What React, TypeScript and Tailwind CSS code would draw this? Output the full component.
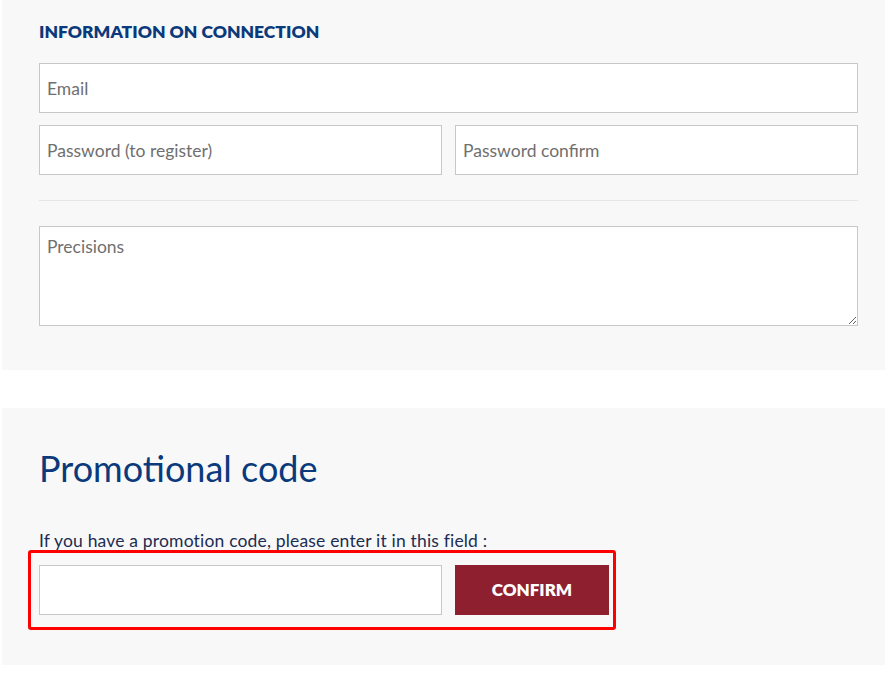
import React from 'react';

const font = { fontFamily: 'Lato, "Open Sans", sans-serif' };

export default function App() {
  const field =
    'h-[50px] w-full border border-[#c8c8c8] bg-white px-[7px] text-[17.5px] text-[#333] placeholder:text-[#6f6f6f] outline-none';

  return (
    <div className="min-h-[673px] w-[885px] bg-white" style={font}>
      {/* Connection info */}
      <section className="ml-[2px] h-[370px] bg-[#f8f8f8] pl-[37px] pt-[20px]">
        <div className="w-[819px]">
          <h3 className="text-[17.5px] font-extrabold uppercase leading-[24px] text-[#0b3a7c]">
            Information on connection
          </h3>
          <div className="mt-[19px] flex flex-col gap-[12px]">
            <input className={field} placeholder="Email" />
            <div className="flex gap-[13px]">
              <input className={field} placeholder="Password (to register)" />
              <input className={field} placeholder="Password confirm" />
            </div>
          </div>
          <hr className="mt-[25px] border-t border-[#e6e6e6]" />
          <textarea
            className="mt-[25px] block h-[100px] w-full border border-[#c8c8c8] bg-white px-[7px] py-[7px] text-[17.5px] text-[#333] placeholder:text-[#6f6f6f] outline-none"
            placeholder="Precisions"
          />
        </div>
      </section>

      {/* Promo code */}
      <section className="ml-[2px] mt-[38px] h-[257px] bg-[#f8f8f8] pl-[37px] pt-[38px]">
        <h2 className="text-[36px] font-normal leading-[44px] text-[#0b3a7c]">Promotional code</h2>
        <p className="mt-[40px] text-[17.5px] leading-[22px] tracking-[0.01em] text-[#1c2c52]">
          If you have a promotion code, please enter it in this field :
        </p>
        <div className="relative mt-[13px] flex w-[570px] gap-[13px]">
          <input className="h-[50px] w-[403px] border border-[#c8c8c8] bg-white px-[7px] text-[17px] outline-none" />
          <button className="h-[50px] w-[154px] bg-[#8e1f2f] text-[17px] font-extrabold uppercase text-white">
            Confirm
          </button>
          <div className="pointer-events-none absolute left-[-11px] top-[-15px] h-[80px] w-[588px] rounded-[3px] border-[3px] border-[#ff0000]" />
        </div>
      </section>
    </div>
  );
}
